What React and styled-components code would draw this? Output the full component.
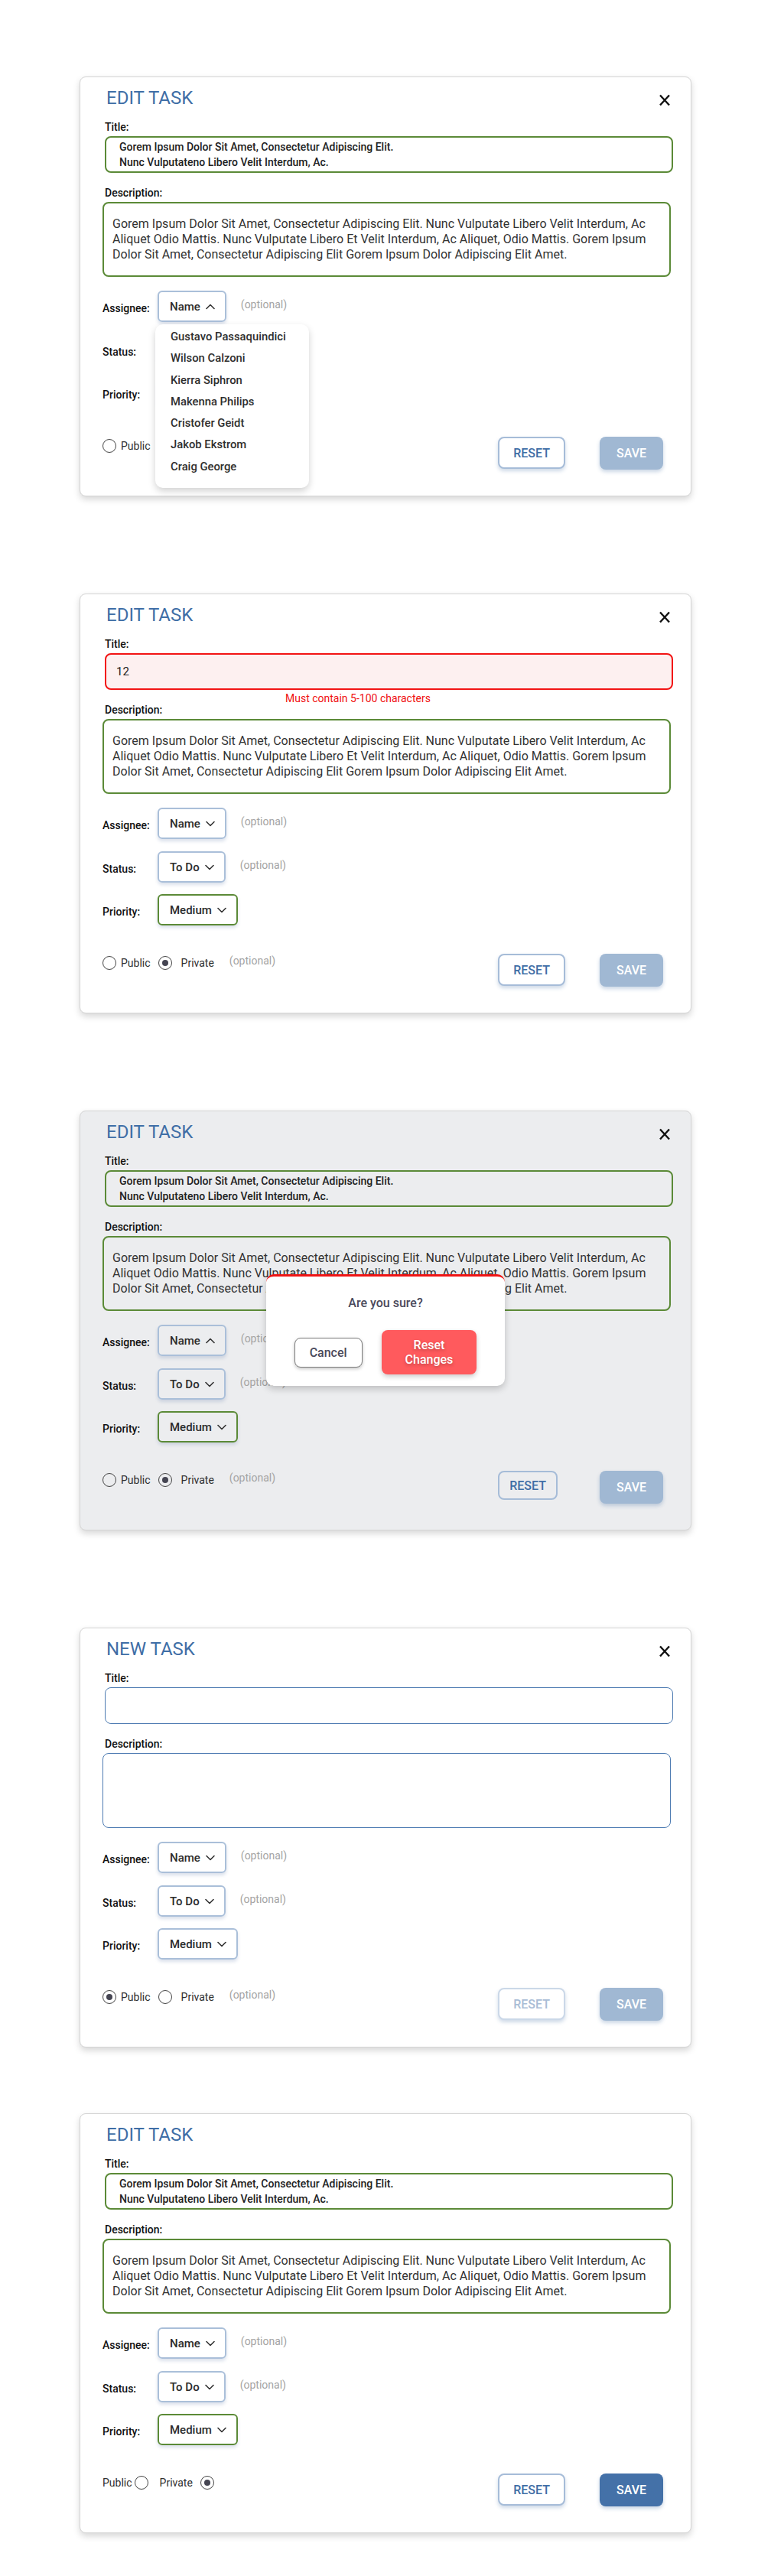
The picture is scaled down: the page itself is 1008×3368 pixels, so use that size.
import React from 'react';
import styled, { createGlobalStyle } from 'styled-components';

const TITLE_TEXT = 'Gorem Ipsum Dolor Sit Amet, Consectetur Adipiscing Elit.\nNunc Vulputateno Libero Velit Interdum, Ac.';
const DESC_TEXT =
    'Gorem Ipsum Dolor Sit Amet, Consectetur Adipiscing Elit. Nunc Vulputate Libero Velit Interdum, Ac\n' +
    'Aliquet Odio Mattis. Nunc Vulputate Libero Et Velit Interdum, Ac Aliquet, Odio Mattis. Gorem Ipsum\n' +
    'Dolor Sit Amet, Consectetur Adipiscing Elit Gorem Ipsum Dolor Adipiscing Elit Amet.';

const assignees = [
    'Gustavo Passaquindici',
    'Wilson Calzoni',
    'Kierra Siphron',
    'Makenna Philips',
    'Cristofer Geidt',
    'Jakob Ekstrom',
    'Craig George',
];

const GlobalStyle = createGlobalStyle`
    * { box-sizing: border-box; }
    body {
        margin: 0;
        background: #fff;
        font-family: Roboto, "Liberation Sans", Arial, sans-serif;
        color: #222;
    }
`;

const Page = styled.div`
    width: 1008px;
    min-height: 3368px;
    display: flex;
    flex-direction: column;
    align-items: center;
`;

const Card = styled.div`
    position: relative;
    width: 800px;
    height: 549px;
    margin-top: ${p => p.$top}px;
    padding: 12px 26px 0 29px;
    border: 1px solid #d4d4d4;
    border-radius: 8px;
    background: ${p => (p.$dim ? '#ecedef' : '#fff')};
    box-shadow: 0 4px 9px rgba(0, 0, 0, 0.16);
`;

const Header = styled.div`
    display: flex;
    justify-content: space-between;
    align-items: flex-start;
    height: 30px;
`;

const Heading = styled.h2`
    margin: 0;
    padding-left: 5px;
    font-size: 24px;
    line-height: 30px;
    font-weight: 400;
    color: #3f6ea6;
`;

const CloseButton = styled.span`
    display: flex;
    margin-top: 10px;
`;

const FieldLabel = styled.div`
    margin-left: 3px;
    margin-top: ${p => p.$mt || 0}px;
    font-size: 14px;
    line-height: 18px;
    font-weight: 500;
    color: #111;
`;

const toneBorder = {
    green: '2px solid #5b8a37',
    blue: '1.5px solid #4d7bb2',
    error: '2px solid #f21414',
};

const TitleBox = styled.div`
    display: flex;
    align-items: center;
    height: 48px;
    margin: 3px -3px 0 3px;
    padding: 0 10px 0 ${p => (p.$tone === 'error' ? 13 : 17)}px;
    border: ${p => toneBorder[p.$tone]};
    border-radius: 8px;
    background: ${p => (p.$tone === 'error' ? '#fdf0f0' : 'transparent')};
    font-size: ${p => (p.$tone === 'error' ? 15 : 14)}px;
    font-weight: ${p => (p.$tone === 'error' ? 400 : 500)};
    line-height: 20px;
    color: #222;
    white-space: pre;
`;

const ErrorSlot = styled.div`
    height: 17px;
    padding: 3px 0 0 239px;
    font-size: 14px;
    line-height: 16px;
    color: #f01010;
`;

const DescBox = styled.div`
    height: 98px;
    margin-top: 3px;
    padding: 17px 4px 0 11px;
    border: ${p => toneBorder[p.$tone]};
    border-radius: 8px;
    font-size: 16px;
    line-height: 20px;
    color: #333;
    white-space: pre;
`;

const FormRow = styled.div`
    display: flex;
    align-items: center;
    height: 41px;
    margin-top: ${p => p.$mt}px;
`;

const RowLabel = styled.div`
    width: 72px;
    padding-top: 4px;
    font-size: 14px;
    font-weight: 500;
    color: #111;
`;

const SelectWrap = styled.div`
    position: relative;
`;

const Select = styled.div`
    display: inline-flex;
    align-items: center;
    gap: 7px;
    height: 41px;
    padding: 0 13px 0 14px;
    border: 2px solid ${p => (p.$green ? '#5b8a37' : '#aabfd9')};
    border-radius: 6px;
    font-size: 15px;
    font-weight: 500;
    color: #2b2b2b;
    box-shadow: 0 3px 4px rgba(90, 120, 170, 0.22);
`;

const Optional = styled.span`
    margin-left: ${p => p.$ml || 19}px;
    margin-bottom: 5px;
    font-size: 14px;
    color: #a4a4a4;
`;

const Menu = styled.ul`
    position: absolute;
    top: calc(100% + 3px);
    left: -3px;
    z-index: 5;
    width: 201px;
    margin: 0;
    padding: 2px 0 14px;
    list-style: none;
    background: #fff;
    border-radius: 10px;
    box-shadow: 0 4px 10px rgba(0, 0, 0, 0.18);
`;

const MenuItem = styled.li`
    height: 28.3px;
    line-height: 28px;
    padding-left: 20px;
    font-size: 14.8px;
    font-weight: 500;
    color: #2f2f2f;
`;

const BottomRow = styled.div`
    display: flex;
    justify-content: space-between;
    align-items: center;
    height: 43px;
    margin-top: 37px;
`;

const RadioGroup = styled.div`
    display: flex;
    align-items: center;
    height: 18px;
    margin-bottom: 20px;
`;

const RadioOption = styled.label`
    display: inline-flex;
    align-items: center;
    gap: ${p => p.$gap}px;
    margin-right: ${p => p.$mr || 0}px;
    font-size: 14px;
    color: #2f2f2f;
`;

const RadioDot = styled.span`
    display: inline-flex;
    align-items: center;
    justify-content: center;
    width: 18px;
    height: 18px;
    border: 1.5px solid #444;
    border-radius: 50%;

    &::after {
        content: '';
        width: 8px;
        height: 8px;
        border-radius: 50%;
        background: ${p => (p.$checked ? '#454552' : 'transparent')};
    }
`;

const ButtonGroup = styled.div`
    display: flex;
    align-items: flex-start;
    gap: 45px;
    height: 43px;
    margin-right: 10px;
`;

const ResetButton = styled.button`
    height: ${p => (p.$compact ? 38 : 42)}px;
    padding: 0 ${p => (p.$compact ? 13 : 18)}px;
    margin-right: ${p => (p.$compact ? 10 : 0)}px;
    border: 2px solid ${p => (p.$disabled ? '#cbd8e8' : '#a6bcd8')};
    border-radius: 8px;
    background: ${p => (p.$compact ? 'transparent' : '#fff')};
    font-family: inherit;
    font-size: 16px;
    font-weight: 500;
    color: ${p => (p.$disabled ? '#a9bdd6' : '#3f6ea6')};
    box-shadow: ${p => (p.$compact ? 'none' : '0 3px 5px rgba(80, 120, 170, 0.28)')};
`;

const SaveButton = styled.button`
    height: 43px;
    padding: 0 22px;
    border: none;
    border-radius: 8px;
    background: ${p => (p.$active ? '#4471a8' : '#a0b8d3')};
    font-family: inherit;
    font-size: 16px;
    font-weight: 500;
    color: #fff;
    box-shadow: 0 3px 5px rgba(80, 120, 170, 0.3);
`;

const ConfirmBox = styled.div`
    position: absolute;
    top: 213px;
    left: 50%;
    z-index: 10;
    transform: translateX(-50%);
    display: flex;
    flex-direction: column;
    align-items: center;
    width: 312px;
    height: 146px;
    padding-top: 25px;
    border-top: 3px solid #f01414;
    border-radius: 10px;
    background: #fff;
    box-shadow: 0 4px 10px rgba(0, 0, 0, 0.2);
`;

const ConfirmText = styled.div`
    font-size: 16px;
    line-height: 20px;
    font-weight: 500;
    color: #4a4a5c;
`;

const ConfirmActions = styled.div`
    display: flex;
    align-items: center;
    gap: 25px;
    margin-top: 25px;
`;

const CancelButton = styled.button`
    height: 39px;
    padding: 0 19px;
    border: 1.5px solid #7a7a7a;
    border-radius: 8px;
    background: #fff;
    font-family: inherit;
    font-size: 16px;
    font-weight: 500;
    color: #4a4a5c;
    box-shadow: 0 2px 4px rgba(0, 0, 0, 0.22);
`;

const DangerButton = styled.button`
    height: 58px;
    padding: 0 31px;
    border: none;
    border-radius: 8px;
    background: #ff5a5d;
    font-family: inherit;
    font-size: 16px;
    line-height: 19px;
    font-weight: 500;
    color: #fff;
    text-shadow: 0 2px 4px rgba(0, 0, 0, 0.25);
    box-shadow: 0 3px 6px rgba(0, 0, 0, 0.2);
`;

const Chevron = ({ up }) => (
    <svg width="12" height="8" viewBox="0 0 12 8" fill="none">
        <polyline
            points={up ? '1,6.5 6,1.5 11,6.5' : '1,1.5 6,6.5 11,1.5'}
            stroke="#333"
            strokeWidth="1.6"
            strokeLinecap="round"
            strokeLinejoin="round"
        />
    </svg>
);

const CloseIcon = () => (
    <svg width="16" height="16" viewBox="0 0 16 16">
        <path d="M2 1.5L14 14.5M14 1.5L2 14.5" stroke="#111" strokeWidth="2.4" />
    </svg>
);

const Radio = ({ label, checked, gap, mr, reverse }) => (
    <RadioOption $gap={gap} $mr={mr}>
        {reverse && label}
        <RadioDot $checked={checked} />
        {!reverse && label}
    </RadioOption>
);

const TaskCard = ({
    top,
    heading = 'EDIT TASK',
    closable = true,
    titleTone = 'green',
    titleText = TITLE_TEXT,
    error,
    descTone = 'green',
    descText = DESC_TEXT,
    assigneeOpen,
    showMenu,
    priorityGreen,
    isPublic,
    reverseRadios,
    visibilityOptional = true,
    resetVariant,
    saveActive,
    dim,
    confirm,
}) => (
    <Card $top={top} $dim={dim}>
        <Header>
            <Heading>{heading}</Heading>
            {closable && (
                <CloseButton>
                    <CloseIcon />
                </CloseButton>
            )}
        </Header>

        <FieldLabel $mt={14}>Title:</FieldLabel>
        <TitleBox $tone={titleTone}>{titleText}</TitleBox>
        <ErrorSlot>{error}</ErrorSlot>

        <FieldLabel>Description:</FieldLabel>
        <DescBox $tone={descTone}>{descText}</DescBox>

        <FormRow $mt={18}>
            <RowLabel>Assignee:</RowLabel>
            <SelectWrap>
                <Select>
                    Name <Chevron up={assigneeOpen} />
                </Select>
                {showMenu && (
                    <Menu>
                        {assignees.map(name => (
                            <MenuItem key={name}>{name}</MenuItem>
                        ))}
                    </Menu>
                )}
            </SelectWrap>
            <Optional>(optional)</Optional>
        </FormRow>

        <FormRow $mt={16}>
            <RowLabel>Status:</RowLabel>
            <Select>
                To Do <Chevron />
            </Select>
            <Optional>(optional)</Optional>
        </FormRow>

        <FormRow $mt={15}>
            <RowLabel>Priority:</RowLabel>
            <Select $green={priorityGreen}>
                Medium <Chevron />
            </Select>
        </FormRow>

        <BottomRow>
            <RadioGroup>
                {reverseRadios ? (
                    <>
                        <Radio label="Public" checked={isPublic} gap={3} mr={15} reverse />
                        <Radio label="Private" checked={!isPublic} gap={10} reverse />
                    </>
                ) : (
                    <>
                        <Radio label="Public" checked={isPublic} gap={6} mr={10} />
                        <Radio label="Private" checked={!isPublic} gap={12} />
                    </>
                )}
                {visibilityOptional && <Optional $ml={20}>(optional)</Optional>}
            </RadioGroup>
            <ButtonGroup>
                <ResetButton
                    $compact={resetVariant === 'compact'}
                    $disabled={resetVariant === 'disabled'}
                >
                    RESET
                </ResetButton>
                <SaveButton $active={saveActive}>SAVE</SaveButton>
            </ButtonGroup>
        </BottomRow>

        {confirm && (
            <ConfirmBox>
                <ConfirmText>Are you sure?</ConfirmText>
                <ConfirmActions>
                    <CancelButton>Cancel</CancelButton>
                    <DangerButton>
                        Reset
                        <br />
                        Changes
                    </DangerButton>
                </ConfirmActions>
            </ConfirmBox>
        )}
    </Card>
);

const App = () => (
    <Page>
        <GlobalStyle />
        <TaskCard top={100} assigneeOpen showMenu />
        <TaskCard
            top={127}
            titleTone="error"
            titleText="12"
            error="Must contain 5-100 characters"
            priorityGreen
        />
        <TaskCard top={127} assigneeOpen priorityGreen resetVariant="compact" dim confirm />
        <TaskCard
            top={127}
            heading="NEW TASK"
            titleTone="blue"
            titleText=""
            descTone="blue"
            descText=""
            isPublic
            resetVariant="disabled"
        />
        <TaskCard
            top={86}
            closable={false}
            priorityGreen
            reverseRadios
            visibilityOptional={false}
            saveActive
        />
    </Page>
);

export default App;
